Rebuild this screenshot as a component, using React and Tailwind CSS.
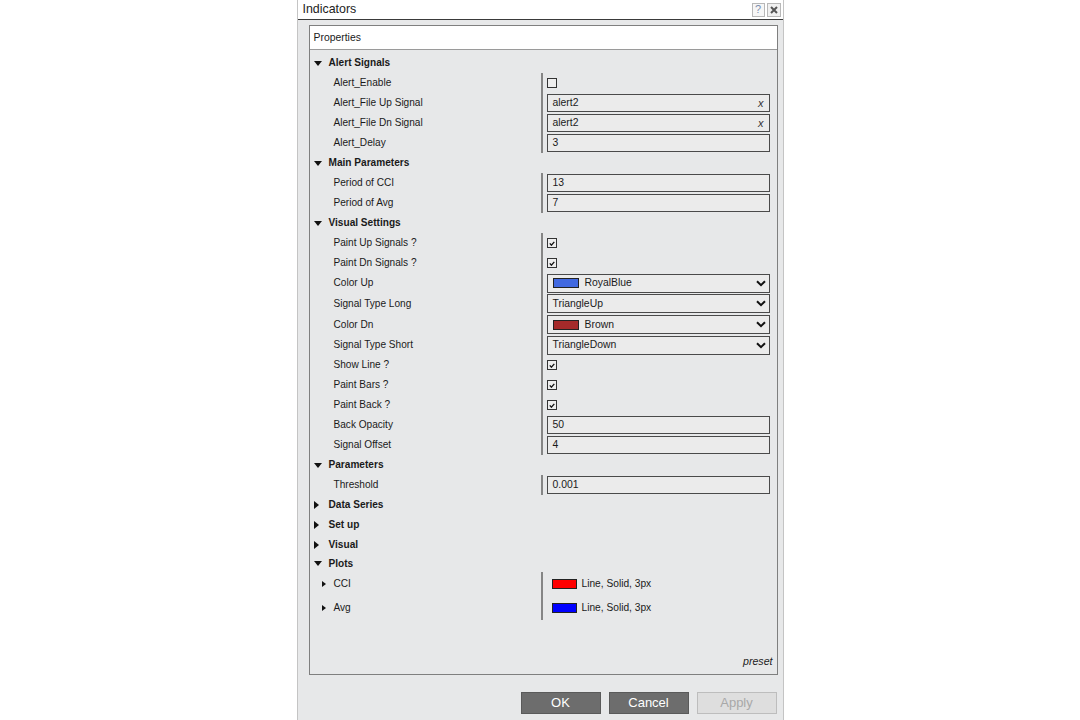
import React from "react";

const groups = [
  {
    title: "Alert Signals",
    open: true,
    rows: [
      { label: "Alert_Enable", type: "check", checked: false },
      { label: "Alert_File Up Signal", type: "file", value: "alert2" },
      { label: "Alert_File Dn Signal", type: "file", value: "alert2" },
      { label: "Alert_Delay", type: "text", value: "3" },
    ],
  },
  {
    title: "Main Parameters",
    open: true,
    rows: [
      { label: "Period of CCI", type: "text", value: "13" },
      { label: "Period of Avg", type: "text", value: "7" },
    ],
  },
  {
    title: "Visual Settings",
    open: true,
    rows: [
      { label: "Paint Up Signals ?", type: "check", checked: true },
      { label: "Paint Dn Signals ?", type: "check", checked: true },
      { label: "Color Up", type: "color", value: "RoyalBlue", swatch: "bg-[#4169e1]" },
      { label: "Signal Type Long", type: "select", value: "TriangleUp", tall: true },
      { label: "Color Dn", type: "color", value: "Brown", swatch: "bg-[#a52a2a]", tall: true },
      { label: "Signal Type Short", type: "select", value: "TriangleDown" },
      { label: "Show Line ?", type: "check", checked: true },
      { label: "Paint Bars ?", type: "check", checked: true },
      { label: "Paint Back ?", type: "check", checked: true },
      { label: "Back Opacity", type: "text", value: "50" },
      { label: "Signal Offset", type: "text", value: "4" },
    ],
  },
  {
    title: "Parameters",
    open: true,
    rows: [{ label: "Threshold", type: "text", value: "0.001" }],
  },
  { title: "Data Series", open: false, rows: [] },
  { title: "Set up", open: false, rows: [] },
  { title: "Visual", open: false, rows: [] },
];

const plots = [
  { label: "CCI", swatch: "bg-[#ff0000]" },
  { label: "Avg", swatch: "bg-[#0000ff]" },
];

function TriDown() {
  return (
    <svg width="8" height="5" viewBox="0 0 8 5" className="shrink-0">
      <path d="M0 0h8L4 5z" fill="#111" />
    </svg>
  );
}

function TriRight({ small }) {
  return small ? (
    <svg width="4" height="6" viewBox="0 0 4 6" className="shrink-0">
      <path d="M0 0l4 3-4 3z" fill="#111" />
    </svg>
  ) : (
    <svg width="5" height="8" viewBox="0 0 5 8" className="shrink-0">
      <path d="M0 0l5 4-5 4z" fill="#111" />
    </svg>
  );
}

function Chevron() {
  return (
    <svg width="10" height="7" viewBox="0 0 10 7" className="shrink-0">
      <path d="M1 1.2l4 4 4-4" fill="none" stroke="#111" strokeWidth="2" />
    </svg>
  );
}

function Value({ row }) {
  if (row.type === "check") {
    return (
      <span className="w-[10px] h-[10px] border border-[#333] bg-[#eeeeee] flex items-center justify-center">
        {row.checked && (
          <svg width="6" height="5" viewBox="0 0 6 5">
            <path d="M0.8 2.4l1.6 1.8L5.3 0.8" fill="none" stroke="#111" strokeWidth="1.3" />
          </svg>
        )}
      </span>
    );
  }
  if (row.type === "select" || row.type === "color") {
    return (
      <div className="w-[223px] h-[19px] border border-[#4a4a4a] bg-[#ebebeb] flex items-center pl-[5px] pr-[3px]">
        {row.type === "color" && (
          <span className={`w-[26px] h-[10px] border border-[#222] ${row.swatch} mr-[6px]`} />
        )}
        <span className="flex-1 text-[10.4px] text-[#1a1a1a]">{row.value}</span>
        <Chevron />
      </div>
    );
  }
  return (
    <div className="w-[223px] h-[18px] border border-[#4a4a4a] bg-[#ebebeb] flex items-center pl-[5px] pr-[5px]">
      <span className="flex-1 text-[10.4px] text-[#1a1a1a]">{row.value}</span>
      {row.type === "file" && <span className="italic text-[11px] text-[#333]">x</span>}
    </div>
  );
}

export default function App() {
  return (
    <div className="min-h-screen bg-white flex justify-center font-['Liberation_Sans',Arial,sans-serif]">
      <div className="w-[487px] h-[720px] border-x border-[#c4c4c4] bg-[#e7e8e9] flex flex-col">
        <div className="h-[20px] bg-white border-b border-[#3a3a3a] flex items-center pl-[5px] pr-[2px]">
          <span className="flex-1 text-[12.4px] text-[#222]">Indicators</span>
          <span className="w-[13px] h-[14px] border border-[#b8b8b8] bg-[#f6f6f6] flex items-center justify-center text-[11px] leading-none text-[#7a8fae] mr-[2px]">
            ?
          </span>
          <span className="w-[14px] h-[14px] border border-[#b8b8b8] bg-[#f0f0f0] flex items-center justify-center">
            <svg width="8" height="8" viewBox="0 0 8 8">
              <path d="M1 1l6 6M7 1L1 7" stroke="#555" strokeWidth="2" />
            </svg>
          </span>
        </div>

        <div className="ml-[11px] mt-[5px] w-[469px] h-[650px] border-[1.5px] border-[#7f7f7f] flex flex-col">
          <div className="h-[24px] bg-white border-b border-[#9a9a9a] flex items-center pl-[4px] text-[10.4px] text-[#1a1a1a]">
            Properties
          </div>
          <div className="flex-1 pt-[2px] flex flex-col text-[10.1px] text-[#1a1a1a]">
            {groups.map((g, i) => (
              <div key={g.title} className="flex flex-col">
                <div className={`${i === 0 ? "h-[21px] pt-[1px]" : "h-[20px]"} flex items-center pl-[4px] gap-[7px]`}>
                  {g.open ? <TriDown /> : <span className="w-[8px] flex"><TriRight /></span>}
                  <span className="font-bold">{g.title}</span>
                </div>
                {g.rows.map((r) => (
                  <div key={r.label} className={`${r.tall ? "h-[21px]" : "h-[20px]"} flex`}>
                    <div className="w-[231px] flex items-center pl-[24px]">{r.label}</div>
                    <div className="flex-1 border-l-2 border-[#858585] flex items-center pl-[4px]">
                      <Value row={r} />
                    </div>
                  </div>
                ))}
              </div>
            ))}
            <div className="h-[17px] flex items-center pl-[4px] gap-[7px]">
              <TriDown />
              <span className="font-bold">Plots</span>
            </div>
            {plots.map((p) => (
              <div key={p.label} className="h-[24px] flex">
                <div className="w-[231px] flex items-center pl-[12px] gap-[8px]">
                  <TriRight small />
                  <span>{p.label}</span>
                </div>
                <div className="flex-1 border-l-2 border-[#858585] flex items-center pl-[9px] gap-[5px]">
                  <span className={`w-[25px] h-[10px] border border-[#222] ${p.swatch}`} />
                  <span className="text-[10.2px]">Line, Solid, 3px</span>
                </div>
              </div>
            ))}
            <div className="flex-1" />
            <div className="h-[20px] flex items-start justify-end pr-[4px] italic text-[10.6px] text-[#222]">
              preset
            </div>
          </div>
        </div>

        <div className="mt-[17px] flex justify-end gap-[8px] pr-[6px]">
          <button className="w-[80px] h-[22px] bg-[#6d6d6d] border border-[#5a5a5a] text-white text-[13px]">OK</button>
          <button className="w-[80px] h-[22px] bg-[#6d6d6d] border border-[#5a5a5a] text-white text-[13px]">Cancel</button>
          <button className="w-[80px] h-[22px] bg-[#dedede] border border-[#bdbdbd] text-[#a8a8a8] text-[13px]">Apply</button>
        </div>
      </div>
    </div>
  );
}
